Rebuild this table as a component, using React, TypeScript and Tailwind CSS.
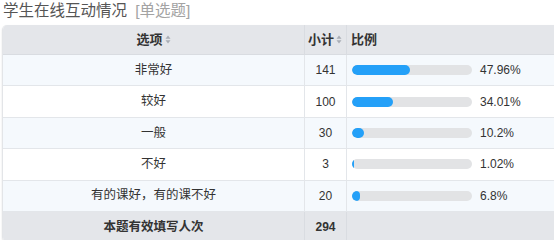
import React from 'react';

const rows = [
  { label: '非常好', count: 141, pct: 47.96, text: '47.96%' },
  { label: '较好', count: 100, pct: 34.01, text: '34.01%' },
  { label: '一般', count: 30, pct: 10.2, text: '10.2%' },
  { label: '不好', count: 3, pct: 1.02, text: '1.02%' },
  { label: '有的课好，有的课不好', count: 20, pct: 6.8, text: '6.8%' },
];

const SortIcon: React.FC = () => (
  <svg width="6" height="9" viewBox="0 0 6 9" className="inline-block ml-[2px] align-middle">
    <path d="M3 0.5 L5.5 3.8 H0.5 Z" fill="#a9adb4" />
    <path d="M3 8.5 L5.5 5.2 H0.5 Z" fill="#a9adb4" />
  </svg>
);

export default function App() {
  return (
    <div
      className="w-[554px] h-[240px] overflow-hidden bg-white text-[12.5px] text-[#333]"
      style={{ fontFamily: '"Liberation Sans", "Noto Sans CJK SC", sans-serif' }}
    >
      {/* Title */}
      <div className="h-[25px] pl-[3px] text-[15.5px] leading-[21px] text-[#555]">
        学生在线互动情况 <span className="ml-[4px] text-[#a3a3a3]">[单选题]</span>
      </div>

      <div className="ml-[2px] w-[580px] rounded-[5px] overflow-hidden border-l border-[#e3e5e8] shadow-[0_1px_2px_rgba(0,0,0,0.12)]">
        {/* Header */}
        <div className="grid grid-cols-[302px_42px_1fr] h-[30px] bg-[#e4e6ea] text-[13px] font-bold border-b border-[#d9dce1]">
          <div className="flex items-center justify-center border-r border-[#d9dce1]">
            选项<SortIcon />
          </div>
          <div className="flex items-center pl-[3px] border-r border-[#d9dce1]">
            小计<SortIcon />
          </div>
          <div className="flex items-center pl-[4px]">比例</div>
        </div>

        {/* Rows */}
        {rows.map((r, i) => (
          <div
            key={r.label}
            className={`grid grid-cols-[302px_42px_1fr] h-[31.4px] border-b border-[#e3e6ea] ${
              i % 2 === 0 ? 'bg-[#f5f9fd]' : 'bg-white'
            }`}
          >
            <div className="flex items-center justify-center border-r border-[#e3e6ea]">{r.label}</div>
            <div className="flex items-center justify-center border-r border-[#e3e6ea] text-[12px]">{r.count}</div>
            <div className="flex items-center pl-[5px]">
              <div className="w-[120px] h-[10px] rounded-full bg-[#e2e3e5] overflow-hidden">
                <div className="h-full rounded-full bg-[#24a0f8]" style={{ width: `${r.pct}%`, minWidth: 2 }} />
              </div>
              <span className="ml-[8px] text-[12px]">{r.text}</span>
            </div>
          </div>
        ))}

        {/* Footer */}
        <div className="grid grid-cols-[302px_42px_1fr] h-[30px] bg-[#e4e6ea] font-bold">
          <div className="flex items-center justify-center border-r border-[#d9dce1]">本题有效填写人次</div>
          <div className="flex items-center justify-center border-r border-[#d9dce1] text-[12px]">294</div>
          <div />
        </div>
      </div>
    </div>
  );
}
